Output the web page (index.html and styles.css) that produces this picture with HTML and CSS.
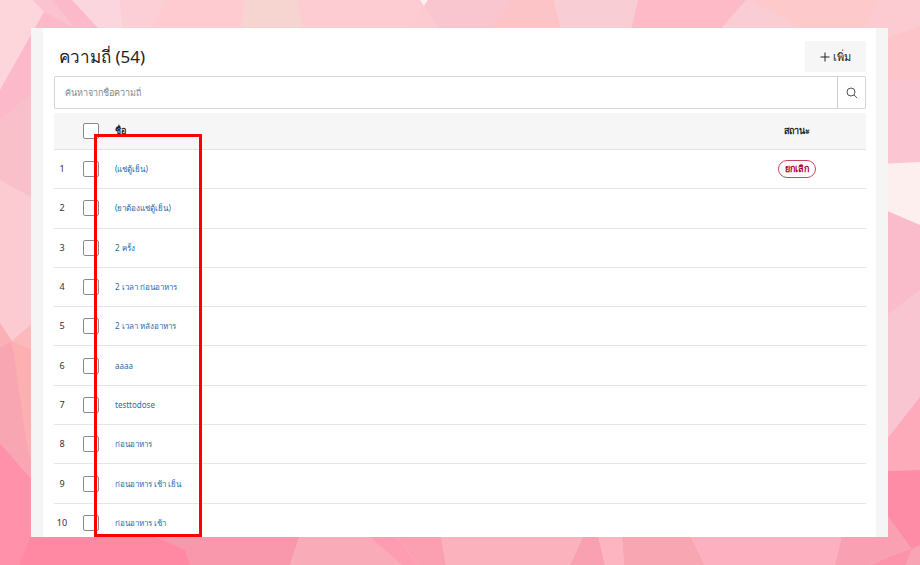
FILE: index.html
```
<!DOCTYPE html>
<html lang="th">
<head>
  <meta charset="UTF-8">
  <title>ความถี่</title>
  <meta name="viewport" content="width=device-width, initial-scale=1">
  <link rel="stylesheet" href="styles.css">
</head>
<body>
  <!-- Low-poly backdrop -->
  <svg class="backdrop" viewBox="0 0 920 565" preserveAspectRatio="none" aria-hidden="true">
    <rect width="920" height="565" fill="#fccbd1"/>
    <!-- top -->
    <path fill="#fdd6db" d="M0 0H50L44 12L0 90Z"/>
    <path fill="#fbb9c9" d="M52 0H72L100 30H36V140L0 170V90L44 12Z"/>
    <path fill="#fac3cf" d="M33 0H52L75 28L44 12Z"/>
    <path fill="#fcd6de" d="M72 0H120L123 30H100Z"/>
    <path fill="#fccfd6" d="M120 0H168L150 30H123Z"/>
    <path fill="#fdcbd0" d="M168 0H244L241 30H150Z"/>
    <path fill="#f6d5d1" d="M244 0H297L304 30H241Z"/>
    <path fill="#fcccd2" d="M297 0H420L424 6L410 30H304Z"/>
    <path fill="#fdf0f2" d="M420 0H428L424 6Z"/>
    <path fill="#f9c5cf" d="M428 0H520L510 30H440L424 6Z"/>
    <path fill="#fdc4c8" d="M510 0H554L561 30H490Z"/>
    <path fill="#f8cdd4" d="M554 0H638L631 30H561Z"/>
    <path fill="#febbc7" d="M638 0H746L720 30H631Z"/>
    <path fill="#f9cdd3" d="M746 0L805 30H720Z"/>
    <path fill="#fdc9cb" d="M750 0H880L862 30H805Z"/>
    <!-- right -->
    <path fill="#fdc4ca" d="M880 41L920 26V80L880 95Z"/>
    <path fill="#fbc6d2" d="M880 80H920V162L880 165Z"/>
    <path fill="#fcefee" d="M880 164L920 162V225L880 208Z"/>
    <path fill="#fabccb" d="M880 208L920 225V310L880 330Z"/>
    <path fill="#f9c5d0" d="M880 320L920 290V397L880 448Z"/>
    <path fill="#feaabb" d="M880 448L920 397V470L880 471Z"/>
    <path fill="#fe8ca6" d="M880 471L920 470V565H880Z"/>
    <!-- left -->
    <path fill="#fac0c9" d="M0 120L36 90V200L0 180Z"/>
    <path fill="#fbb0b5" d="M0 323L12 341L0 347Z"/>
    <path fill="#fbb9bc" d="M12 341L36 320V352Z"/>
    <path fill="#fcb0af" d="M12 341L36 352V484L24 440Z"/>
    <path fill="#f9a6b3" d="M0 347L12 341L26 440L36 484L0 443Z"/>
    <path fill="#ff91ab" d="M0 443L36 484V537L19 565H0Z"/>
    <!-- bottom -->
    <path fill="#ff88a3" d="M31 535H160L188 550L190 565H19Z"/>
    <path fill="#f998ac" d="M150 535H300L290 565H190L185 550Z"/>
    <path fill="#f9abb8" d="M300 535H367L402 565H290Z"/>
    <path fill="#fe9db1" d="M367 535H395L418 565H402Z"/>
    <path fill="#faa0b0" d="M395 535H441L446 565H418Z"/>
    <path fill="#fbb2bc" d="M441 535H584L570 565H446Z"/>
    <path fill="#f9a0b1" d="M584 535H598L605 565H570Z"/>
    <path fill="#fdb5c1" d="M598 535H622L624 565H605Z"/>
    <path fill="#f9a6b3" d="M622 535H690L705 565H624Z"/>
    <path fill="#fdb0bf" d="M690 535H842L835 565H705Z"/>
    <path fill="#f9a0b2" d="M842 535H880V505L912 549L870 565H835Z"/>
    <path fill="#fc93aa" d="M870 565L912 549L905 565Z"/>
    <path fill="#f9a4b5" d="M912 549L920 545V565H905Z"/>
  </svg>

  <div class="window">
    <main class="panel">
      <header class="panel-header">
        <h1>ความถี่ (54)</h1>
        <button class="btn-add" type="button">
          <svg width="10" height="10" viewBox="0 0 10 10" aria-hidden="true">
            <path d="M5 0.5V9.5M0.5 5H9.5" fill="none" stroke="#222" stroke-width="1"/>
          </svg>
          <span>เพิ่ม</span>
        </button>
      </header>

      <form class="search">
        <input type="text" placeholder="ค้นหาจากชื่อความถี่" aria-label="ค้นหาจากชื่อความถี่">
        <button type="button" aria-label="ค้นหา">
          <svg width="12" height="12" viewBox="0 0 12 12" aria-hidden="true">
            <circle cx="5" cy="5" r="4" fill="none" stroke="#555"/>
            <path d="M8 8L11.2 11" fill="none" stroke="#555"/>
          </svg>
        </button>
      </form>

      <table class="list">
        <thead>
          <tr>
            <th class="col-no"></th>
            <th class="col-check"><input type="checkbox" aria-label="เลือกทั้งหมด"></th>
            <th class="col-name">ชื่อ</th>
            <th class="col-status">สถานะ</th>
          </tr>
        </thead>
        <tbody>
          <tr><td class="col-no">1</td><td><input type="checkbox" aria-label="1"></td><td><a href="#">(แช่ตู้เย็น)</a></td><td class="col-status"><span class="badge">ยกเลิก</span></td></tr>
          <tr><td class="col-no">2</td><td><input type="checkbox" aria-label="2"></td><td><a href="#">(ยาต้องแช่ตู้เย็น)</a></td><td></td></tr>
          <tr><td class="col-no">3</td><td><input type="checkbox" aria-label="3"></td><td><a href="#">2 ครั้ง</a></td><td></td></tr>
          <tr><td class="col-no">4</td><td><input type="checkbox" aria-label="4"></td><td><a href="#">2 เวลา ก่อนอาหาร</a></td><td></td></tr>
          <tr><td class="col-no">5</td><td><input type="checkbox" aria-label="5"></td><td><a href="#">2 เวลา หลังอาหาร</a></td><td></td></tr>
          <tr><td class="col-no">6</td><td><input type="checkbox" aria-label="6"></td><td><a href="#">aaaa</a></td><td></td></tr>
          <tr><td class="col-no">7</td><td><input type="checkbox" aria-label="7"></td><td><a href="#">testtodose</a></td><td></td></tr>
          <tr><td class="col-no">8</td><td><input type="checkbox" aria-label="8"></td><td><a href="#">ก่อนอาหาร</a></td><td></td></tr>
          <tr><td class="col-no">9</td><td><input type="checkbox" aria-label="9"></td><td><a href="#">ก่อนอาหาร เช้า เย็น</a></td><td></td></tr>
          <tr><td class="col-no">10</td><td><input type="checkbox" aria-label="10"></td><td><a href="#">ก่อนอาหาร เช้า</a></td><td></td></tr>
        </tbody>
      </table>
    </main>
    <div class="highlight"></div>
  </div>
</body>
</html>
```
FILE: styles.css
```
* {
  box-sizing: border-box;
}
body {
  margin: 0;
  font-family: "Noto Sans", "Open Sans", sans-serif;
  font-size: 9px;
  color: #333;
}
.backdrop {
  position: fixed;
  inset: 0;
  width: 100%;
  height: 100%;
  z-index: -1;
}

/* Window and panel */
.window {
  position: relative;
  height: calc(100vh - 56px);
  margin: 28px 32px 28px 31px;
  padding: 0 12px;
  background: #f5f5f5;
  overflow: hidden;
}
.panel {
  min-height: 100%;
  padding: 13px 10px 0 11px;
  background: #fff;
}
.panel-header {
  display: flex;
  align-items: center;
  justify-content: space-between;
  height: 31px;
  margin-bottom: 4px;
  padding-left: 5px;
}
h1 {
  margin: 0;
  font-size: 17px;
  font-weight: 400;
  line-height: 30px;
  color: #222;
}
.btn-add {
  display: flex;
  align-items: center;
  justify-content: center;
  gap: 3px;
  width: 61px;
  height: 31px;
  padding: 0;
  border: none;
  background: #f6f6f6;
  color: #222;
  font-family: inherit;
  font-size: 11px;
}

/* Search bar */
.search {
  display: flex;
  height: 33px;
  margin-bottom: 4px;
  border: 1px solid #d6d6d6;
  border-radius: 1px;
}
.search input {
  flex: 1;
  padding: 0 10px;
  border: none;
  outline: none;
  font-family: inherit;
  font-size: 9px;
  color: #333;
}
.search input::placeholder {
  color: #888;
}
.search button {
  display: flex;
  align-items: center;
  justify-content: center;
  width: 28px;
  padding: 0;
  border: none;
  border-left: 1px solid #ccc;
  background: #fff;
}

/* List */
.list {
  width: 100%;
  height: 430px;
  border-collapse: separate;
  border-spacing: 0;
  table-layout: fixed;
}
th,
td {
  padding: 0;
  border-bottom: 1px solid #e4e4e4;
  text-align: left;
  line-height: 16px;
}
th {
  height: 37px;
  background: #f6f6f6;
  color: #222;
  font-weight: 600;
}
td {
  height: 39px;
}
.col-no {
  width: 29px;
  padding-right: 13px;
  text-align: center;
}
.col-check {
  width: 32px;
}
.col-status {
  width: 138px;
  padding-right: 0;
  text-align: center;
}
.list input {
  display: block;
  width: 16px;
  height: 16px;
  margin: 0;
  appearance: none;
  border: 1px solid #8a8a8a;
  border-radius: 2px;
  background: #fff;
}
.list a {
  color: #1f6cb0;
  font-size: 8px;
  text-decoration: none;
}
.badge {
  display: block;
  width: fit-content;
  margin: 0 auto;
  padding: 0 6px;
  border: 1px solid #c94467;
  border-radius: 9px;
  line-height: 16px;
  color: #b00030;
  font-weight: 600;
}

/* Highlight frame over the name column */
.highlight {
  position: absolute;
  top: 106px;
  bottom: 0;
  left: 63px;
  width: 108px;
  border: 3px solid #f00;
}
```
